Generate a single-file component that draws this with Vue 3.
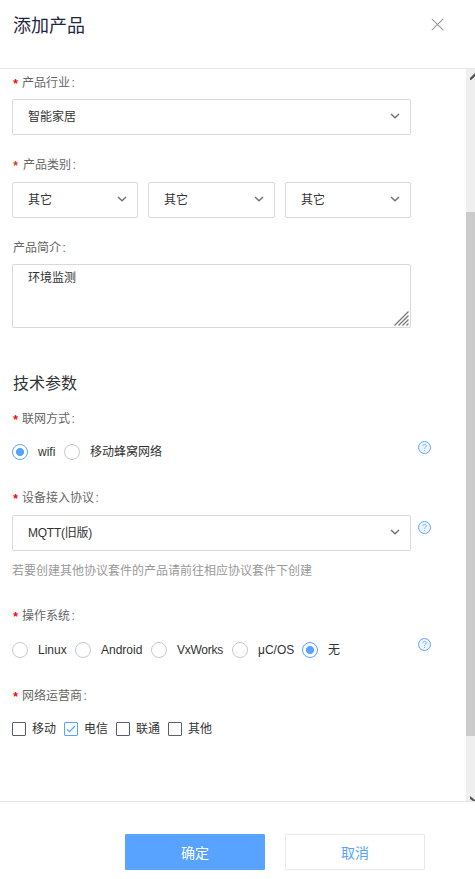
<script setup>
import { ref } from 'vue'

const categories = ['其它', '其它', '其它']
const networks = [
  { name: 'wifi', width: 52 },
  { name: '移动蜂窝网络', width: 110 },
]
const network = ref('wifi')
const systems = [
  { name: 'Linux', width: 63 },
  { name: 'Android', width: 76 },
  { name: 'VxWorks', width: 81 },
  { name: 'μC/OS', width: 70 },
  { name: '无', width: 50 },
]
const system = ref('无')
const carriers = ['移动', '电信', '联通', '其他']
const selected = ref(['电信'])
const intro = ref('环境监测')

function toggle(name) {
  selected.value = selected.value.includes(name)
    ? selected.value.filter((n) => n !== name)
    : [...selected.value, name]
}
</script>

<template>
  <div class="dialog">
    <header class="header">
      <h1>添加产品</h1>
      <svg class="close" width="13" height="13" viewBox="0 0 13 13"><path d="M.8 .8L12.2 12.2M12.2 .8L.8 12.2" /></svg>
    </header>

    <div class="body">
      <main class="form">
        <div class="label"><i>*</i><span>产品行业</span><b>:</b></div>
        <div class="select industry">
          <span>智能家居</span>
          <svg class="arrow" width="10" height="6" viewBox="0 0 10 6"><path d="M1 1L5 4.8L9 1" /></svg>
        </div>

        <div class="label gap-category wide"><i>*</i><span>产品类别</span><b>:</b></div>
        <div class="categories">
          <div v-for="(c, i) in categories" :key="i" class="select">
            <span>{{ c }}</span>
            <svg class="arrow" width="10" height="6" viewBox="0 0 10 6"><path d="M1 1L5 4.8L9 1" /></svg>
          </div>
        </div>

        <div class="label gap-category plain"><span>产品简介</span><b>:</b></div>
        <div class="textarea">
          <span>{{ intro }}</span>
          <svg class="grip" width="15" height="15" viewBox="0 0 15 15"><path d="M.5 14.5L14.5 .5M4.5 14.5L14.5 4.5M8.5 14.5L14.5 8.5M12.5 14.5L14.5 12.5" /></svg>
        </div>

        <h2>技术参数</h2>
        <div class="label gap-network"><i>*</i><span>联网方式</span><b>:</b></div>
        <div class="line network">
          <div class="options">
            <div v-for="n in networks" :key="n.name" class="radio" :class="{ on: network === n.name }" :style="{ width: n.width + 'px' }" @click="network = n.name">
              <em></em><span>{{ n.name }}</span>
            </div>
          </div>
          <svg class="help" width="13" height="13" viewBox="0 0 13 13"><circle cx="6.5" cy="6.5" r="6" /><path d="M4.8 5.1C4.8 2.8 8.3 2.8 8.3 5C8.3 6.3 6.5 6.3 6.5 7.8M6.5 9V10" /></svg>
        </div>

        <div class="label gap-protocol"><i>*</i><span>设备接入协议</span><b>:</b></div>
        <div class="line protocol">
          <div class="select">
            <span class="tight">MQTT(旧版)</span>
            <svg class="arrow" width="10" height="6" viewBox="0 0 10 6"><path d="M1 1L5 4.8L9 1" /></svg>
          </div>
          <svg class="help" width="13" height="13" viewBox="0 0 13 13"><circle cx="6.5" cy="6.5" r="6" /><path d="M4.8 5.1C4.8 2.8 8.3 2.8 8.3 5C8.3 6.3 6.5 6.3 6.5 7.8M6.5 9V10" /></svg>
        </div>
        <p class="hint">若要创建其他协议套件的产品请前往相应协议套件下创建</p>

        <div class="label gap-system"><i>*</i><span>操作系统</span><b>:</b></div>
        <div class="line system">
          <div class="options">
            <div v-for="s in systems" :key="s.name" class="radio" :class="{ on: system === s.name }" :style="{ width: s.width + 'px' }" @click="system = s.name">
              <em></em><span :class="{ tight: s.name === 'VxWorks' }">{{ s.name }}</span>
            </div>
          </div>
          <svg class="help" width="13" height="13" viewBox="0 0 13 13"><circle cx="6.5" cy="6.5" r="6" /><path d="M4.8 5.1C4.8 2.8 8.3 2.8 8.3 5C8.3 6.3 6.5 6.3 6.5 7.8M6.5 9V10" /></svg>
        </div>

        <div class="label gap-protocol"><i>*</i><span>网络运营商</span><b>:</b></div>
        <div class="carriers">
          <div v-for="c in carriers" :key="c" class="check" :class="{ on: selected.includes(c) }" @click="toggle(c)">
            <em><svg v-if="selected.includes(c)" width="10" height="8" viewBox="0 0 10 8"><path d="M1 4.2L3.5 6.6L9 1" /></svg></em>
            <span>{{ c }}</span>
          </div>
        </div>
      </main>

      <aside class="scrollbar">
        <svg class="up" width="9" height="11" viewBox="0 0 9 11"><path d="M4 9L9 4V7.5L5 11H4Z" /></svg>
        <div class="thumb"></div>
        <svg class="down" width="9" height="5" viewBox="0 0 9 5"><path d="M4 0L9 4V5H7L4 3Z" /></svg>
      </aside>
    </div>

    <footer class="footer">
      <button class="primary">确定</button>
      <button>取消</button>
    </footer>
  </div>
</template>

<style>
body {
  background: #fff;
}
</style>

<style scoped>
.dialog {
  box-sizing: border-box;
  width: 475px;
  height: 879px;
  overflow: hidden;
  display: flex;
  flex-direction: column;
  background: #fff;
  color: #333;
  font: 12px/20px "Liberation Sans", "Noto Sans CJK SC", sans-serif;
}
.header {
  box-sizing: border-box;
  height: 69px;
  padding: 12px 31px 0 13px;
  display: flex;
  justify-content: space-between;
  border-bottom: 1px solid #e6e6e6;
}
h1 {
  margin: 0;
  font-size: 18px;
  font-weight: 400;
  line-height: 28px;
  color: #1f2640;
}
.close {
  margin-top: 6px;
}
.close path {
  fill: none;
  stroke: #999;
  stroke-width: 1.1;
}
.body {
  height: 732px;
  display: flex;
  justify-content: space-between;
}
.form {
  width: 419px;
  padding: 4px 0 0 12px;
}
.label {
  display: flex;
  height: 20px;
  color: #666;
}
.label i {
  width: 10px;
  box-sizing: border-box;
  flex: none;
  font: 700 12px/25px "Liberation Mono", monospace;
  color: #f00;
}
.label.wide i {
  width: 11px;
  color: #f0320f;
}
.label.plain {
  padding-left: 1px;
}
.label b {
  margin-left: 1.5px;
  font-weight: 400;
}
.tight {
  letter-spacing: -0.25px;
}
.select {
  box-sizing: border-box;
  height: 36px;
  width: 399px;
  padding: 0 10px 0 15px;
  display: flex;
  align-items: center;
  justify-content: space-between;
  border: 1px solid #d9d9d9;
  border-radius: 2px;
}
.arrow {
  margin-top: -2px;
}
.arrow path {
  fill: none;
  stroke: #707070;
  stroke-width: 1.4;
}
.industry {
  margin-top: 6px;
}
.gap-category {
  margin-top: 20px;
}
.categories {
  margin-top: 7px;
  width: 399px;
  display: grid;
  grid-template-columns: 126px 127px 126px;
  gap: 10px;
}
.categories .select {
  width: auto;
}
.textarea {
  box-sizing: border-box;
  width: 399px;
  height: 64px;
  margin-top: 6px;
  padding: 3px 1px 1px 15px;
  display: flex;
  justify-content: space-between;
  border: 1px solid #d9d9d9;
  border-radius: 2px;
}
.grip {
  align-self: flex-end;
}
.grip path {
  fill: none;
  stroke: #777;
  stroke-width: 1.3;
}
h2 {
  margin: 44px 0 0 1px;
  font-size: 16px;
  font-weight: 400;
  line-height: 24px;
}
.gap-network {
  margin-top: 13px;
}
.line {
  display: flex;
  justify-content: space-between;
}
.options {
  display: flex;
}
.network {
  margin-top: 13px;
}
.help {
  flex: none;
  margin-top: -1px;
}
.help circle {
  fill: #edf5ff;
  stroke: #5da5ff;
}
.help path {
  fill: none;
  stroke: #7ab5ff;
  stroke-width: 1;
}
.radio {
  display: flex;
  align-items: center;
  gap: 10px;
  height: 20px;
  white-space: nowrap;
}
.radio em {
  box-sizing: border-box;
  flex: none;
  width: 16px;
  height: 16px;
  border: 1px solid #c5c8ce;
  border-radius: 50%;
}
.radio.on em {
  border-color: #57a3ff;
  background: radial-gradient(circle, #57a3ff 3.7px, transparent 4.4px);
}
.gap-protocol {
  margin-top: 26px;
}
.protocol {
  margin-top: 7px;
}
.protocol .help {
  margin-top: 6px;
}
.hint {
  margin: 10px 0 0;
  color: #999;
}
.gap-system {
  margin-top: 25px;
}
.system {
  margin-top: 14px;
}
.system .help {
  margin-top: -2px;
}
.carriers {
  display: flex;
  margin-top: 13px;
}
.check {
  width: 52px;
  display: flex;
  align-items: center;
  gap: 6px;
}
.check em {
  box-sizing: border-box;
  width: 14px;
  height: 14px;
  display: flex;
  align-items: center;
  justify-content: center;
  border: 1px solid #575d6c;
  border-radius: 1px;
}
.check.on em {
  border-color: #57a3ff;
}
.check path {
  fill: none;
  stroke: #57a3ff;
  stroke-width: 1.2;
}
.scrollbar {
  width: 9px;
  display: flex;
  flex-direction: column;
  background: #efefef;
}
.scrollbar path {
  fill: #555;
}
.thumb {
  height: 524px;
  margin-top: 132px;
  background: #cbcbcb;
}
.down {
  margin-top: auto;
}
.footer {
  box-sizing: border-box;
  height: 78px;
  padding: 32px 50px 0 0;
  display: flex;
  justify-content: flex-end;
  gap: 20px;
  border-top: 1px solid #e6e6e6;
}
button {
  box-sizing: border-box;
  width: 140px;
  height: 36px;
  padding: 2px 0 0;
  border: 1px solid #e6e8ee;
  border-radius: 1px;
  background: #fff;
  color: #57a3ff;
  font: 14px/20px "Liberation Sans", "Noto Sans CJK SC", sans-serif;
}
button.primary {
  border-color: #57a3ff;
  background: #57a3ff;
  color: #fff;
}
</style>
